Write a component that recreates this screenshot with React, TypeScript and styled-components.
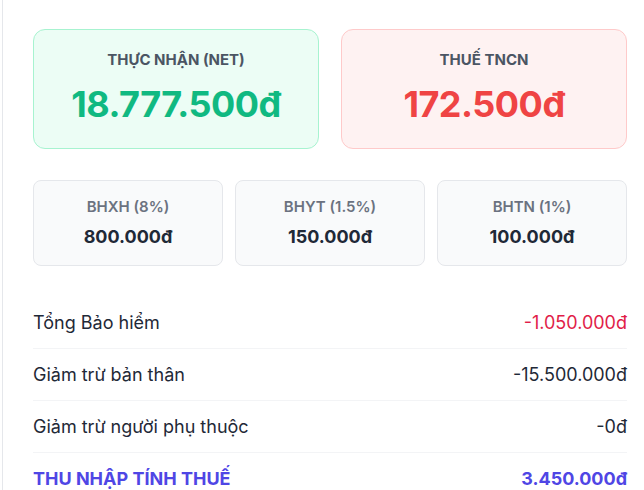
import React from "react";
import styled, { createGlobalStyle } from "styled-components";

const GlobalStyle = createGlobalStyle`
  * {
    box-sizing: border-box;
  }
  body {
    margin: 0;
    background: #ffffff;
    font-family: Inter, "Noto Sans", sans-serif;
    overflow: hidden;
  }
`;

const insurance = [
  { label: "BHXH (8%)", value: "800.000đ" },
  { label: "BHYT (1.5%)", value: "150.000đ" },
  { label: "BHTN (1%)", value: "100.000đ" },
];

const rows = [
  { label: "Tổng Bảo hiểm", value: "-1.050.000đ", tone: "negative" },
  { label: "Giảm trừ bản thân", value: "-15.500.000đ", tone: "normal" },
  { label: "Giảm trừ người phụ thuộc", value: "-0đ", tone: "normal" },
  { label: "THU NHẬP TÍNH THUẾ", value: "3.450.000đ", tone: "total" },
] as const;

export default function App() {
  return (
    <>
      <GlobalStyle />
      <Panel>
        <SummaryGrid>
          <SummaryCard $variant="net">
            <SummaryLabel>Thực nhận (NET)</SummaryLabel>
            <SummaryValue $variant="net">18.777.500đ</SummaryValue>
          </SummaryCard>
          <SummaryCard $variant="tax">
            <SummaryLabel>Thuế TNCN</SummaryLabel>
            <SummaryValue $variant="tax">172.500đ</SummaryValue>
          </SummaryCard>
        </SummaryGrid>

        <InsuranceGrid>
          {insurance.map((item) => (
            <InsuranceCard key={item.label}>
              <InsuranceLabel>{item.label}</InsuranceLabel>
              <InsuranceValue>{item.value}</InsuranceValue>
            </InsuranceCard>
          ))}
        </InsuranceGrid>

        <Breakdown>
          {rows.map((row) => (
            <Row key={row.label}>
              <RowLabel $tone={row.tone}>{row.label}</RowLabel>
              <RowValue $tone={row.tone}>{row.value}</RowValue>
            </Row>
          ))}
        </Breakdown>
      </Panel>
    </>
  );
}

type Variant = "net" | "tax";
type Tone = "negative" | "normal" | "total";

const Panel = styled.div`
  margin-left: 2px;
  width: 658px;
  min-height: 490px;
  border-left: 1px solid #e5e7eb;
  padding: 29px 0 0 30px;
`;

const SummaryGrid = styled.div`
  display: grid;
  grid-template-columns: 286px 286px;
  gap: 22px;
  margin-bottom: 31px;
`;

const SummaryCard = styled.div<{ $variant: Variant }>`
  display: flex;
  flex-direction: column;
  align-items: center;
  justify-content: center;
  gap: 14px;
  height: 120px;
  padding-bottom: 4px;
  border-radius: 12px;
  background: ${(p) => (p.$variant === "net" ? "#ecfdf5" : "#fef2f2")};
  border: 1px solid ${(p) => (p.$variant === "net" ? "#a7f3d0" : "#fecaca")};
`;

const SummaryLabel = styled.div`
  font-size: 15px;
  line-height: 20px;
  font-weight: 700;
  text-transform: uppercase;
  color: #4b5563;
`;

const SummaryValue = styled.div<{ $variant: Variant }>`
  font-size: 36px;
  line-height: 40px;
  font-weight: 700;
  letter-spacing: -0.5px;
  color: ${(p) => (p.$variant === "net" ? "#10b981" : "#ef4444")};
`;

const InsuranceGrid = styled.div`
  display: grid;
  grid-template-columns: repeat(3, 190px);
  gap: 12px;
  margin-bottom: 31px;
`;

const InsuranceCard = styled.div`
  display: flex;
  flex-direction: column;
  align-items: center;
  justify-content: center;
  gap: 8px;
  height: 86px;
  border-radius: 8px;
  background: #f9fafb;
  border: 1px solid #e5e7eb;
`;

const InsuranceLabel = styled.div`
  font-size: 15px;
  line-height: 20px;
  font-weight: 600;
  color: #6b7280;
`;

const InsuranceValue = styled.div`
  font-size: 18px;
  line-height: 24px;
  font-weight: 700;
  color: #1f2937;
`;

const Breakdown = styled.div`
  width: 594px;
  display: flex;
  flex-direction: column;
`;

const Row = styled.div`
  display: flex;
  justify-content: space-between;
  align-items: center;
  padding: 14px 0 13px;
  border-bottom: 1px solid #f3f4f6;

  &:last-child {
    border-bottom: none;
  }
`;

const RowLabel = styled.span<{ $tone: Tone }>`
  font-size: 18px;
  line-height: 24px;
  font-weight: ${(p) => (p.$tone === "total" ? 700 : 400)};
  color: ${(p) => (p.$tone === "total" ? "#4f46e5" : "#1f2937")};
`;

const RowValue = styled.span<{ $tone: Tone }>`
  font-size: 18px;
  line-height: 24px;
  font-weight: ${(p) => (p.$tone === "total" ? 700 : 400)};
  color: ${(p) =>
    p.$tone === "negative" ? "#e11d48" : p.$tone === "total" ? "#4f46e5" : "#1f2937"};
`;
